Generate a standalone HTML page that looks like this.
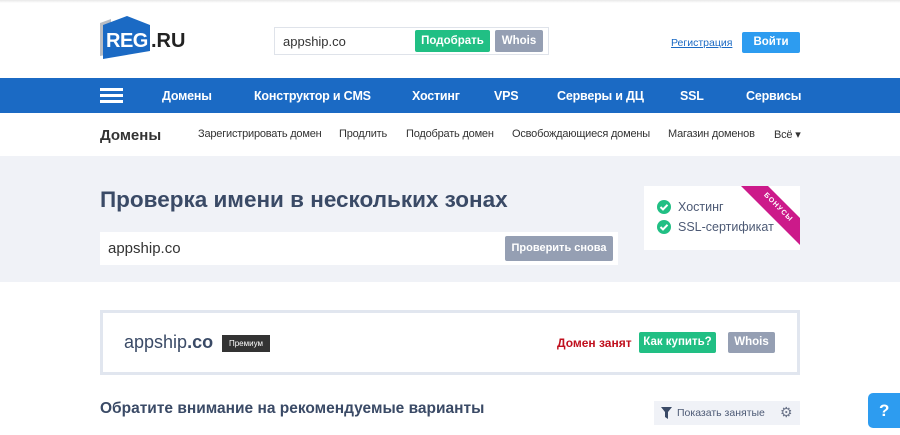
<!DOCTYPE html>
<html><head><meta charset="utf-8"><style>
*{margin:0;padding:0;box-sizing:border-box}
body{width:900px;height:435px;overflow:hidden;background:#fff;font-family:"Liberation Sans",Arial,sans-serif;position:relative;color:#3a4a66}
.a{position:absolute}
.btn{position:absolute;color:#fff;font-weight:bold;font-size:11.5px;text-align:center;border-radius:2px}
</style></head><body>
<div class="a" style="left:0;top:0;width:900px;height:3px;background:linear-gradient(#e8e8e8,#fff)"></div>
<svg class="a" style="left:97px;top:14px" width="56" height="46" viewBox="0 0 56 46"><path d="M3 9 L14 5 L14 40 L3 42Z" fill="#b9bdc4"/><path d="M6 11 L30 2 L53 11 L53 37 L6 45Z" fill="#1b6ac4"/></svg>
<div class="a" style="left:106px;top:30px;font-size:20px;font-weight:bold;color:#fff;letter-spacing:-0.5px">REG</div>
<div class="a" style="left:151px;top:30px;font-size:20px;font-weight:bold;color:#222">.RU</div>
<div class="a" style="left:274px;top:27px;width:275px;height:28px;border:1px solid #dfe3ea"></div>
<div class="a" style="left:283px;top:34px;font-size:13px;color:#333">appship.co</div>
<div class="btn" style="left:415px;top:30px;width:75px;height:22px;line-height:22px;background:#21bf84">Подобрать</div>
<div class="btn" style="left:495px;top:30px;width:48px;height:22px;line-height:22px;background:#959fb3">Whois</div>
<div class="a" style="left:671px;top:37px;font-size:10.5px;color:#1b6ac4;text-decoration:underline">Регистрация</div>
<div class="btn" style="left:742px;top:32px;width:58px;height:21px;line-height:21px;background:#2d9cf0">Войти</div>
<div class="a" style="left:0;top:78px;width:900px;height:35px;background:#1b6ac4"></div>
<div class="a" style="left:100px;top:88px;width:23px;height:3px;background:#fff;box-shadow:0 6px 0 #fff,0 12px 0 #fff"></div>
<div class="a" style="top:89px;left:0;font-size:12.5px;font-weight:bold;color:#fff;white-space:nowrap;letter-spacing:-0.2px">
<span class="a" style="left:162px">Домены</span><span class="a" style="left:254px">Конструктор и CMS</span><span class="a" style="left:412px">Хостинг</span><span class="a" style="left:494px">VPS</span><span class="a" style="left:557px">Серверы и ДЦ</span><span class="a" style="left:680px">SSL</span><span class="a" style="left:746px">Сервисы</span></div>
<div class="a" style="left:100px;top:127px;font-size:15px;font-weight:bold;color:#333">Домены</div>
<div class="a" style="top:128px;left:0;font-size:11px;color:#333;white-space:nowrap;letter-spacing:-0.2px">
<span class="a" style="left:198px">Зарегистрировать домен</span><span class="a" style="left:339px">Продлить</span><span class="a" style="left:406px">Подобрать домен</span><span class="a" style="left:512px">Освобождающиеся домены</span><span class="a" style="left:668px">Магазин доменов</span><span class="a" style="left:774px">Всё ▾</span></div>
<div class="a" style="left:0;top:156px;width:900px;height:126px;background:#f0f2f7"></div>
<div class="a" style="left:100px;top:187px;font-size:22.5px;font-weight:bold;color:#3a4a66">Проверка имени в нескольких зонах</div>
<div class="a" style="left:100px;top:232px;width:518px;height:33px;background:#fff"></div>
<div class="a" style="left:108px;top:240px;font-size:15px;color:#333">appship.co</div>
<div class="btn" style="left:505px;top:236px;width:108px;height:25px;line-height:25px;background:#959fb3;font-size:11px">Проверить снова</div>
<div class="a" style="left:644px;top:186px;width:156px;height:64px;background:#fff;overflow:hidden">
<svg class="a" style="left:0;top:0" width="156" height="64"><polygon points="97,0 124,0 156,32 156,59" fill="#cc1a8a"/></svg>
<div class="a" style="left:104px;top:18px;width:60px;text-align:center;transform:rotate(45deg);color:#fff;font-size:7px;font-weight:bold;letter-spacing:1px">БОНУСЫ</div></div>
<svg class="a" style="left:657px;top:200px" width="14" height="36" viewBox="0 0 14 36"><circle cx="7" cy="7" r="7" fill="#21bf84"/><path d="M3.5 7 L6 9.5 L10.5 4.8" stroke="#fff" stroke-width="2" fill="none"/><circle cx="7" cy="27" r="7" fill="#21bf84"/><path d="M3.5 27 L6 29.5 L10.5 24.8" stroke="#fff" stroke-width="2" fill="none"/></svg>
<div class="a" style="left:678px;top:200px;font-size:12.5px;color:#4d5a75">Хостинг</div>
<div class="a" style="left:678px;top:220px;font-size:12.5px;color:#4d5a75">SSL-сертификат</div>
<div class="a" style="left:100px;top:310px;width:700px;height:65px;border:3px solid #e1e6ef"></div>
<div class="a" style="left:124px;top:332px;font-size:18px;color:#3a4a66">appship<b>.co</b></div>
<div class="a" style="left:222px;top:335px;width:48px;height:17px;background:#333;color:#fff;font-size:8px;text-align:center;line-height:17px">Премиум</div>
<div class="a" style="left:557px;top:336px;font-size:12px;font-weight:bold;color:#c0101e">Домен занят</div>
<div class="btn" style="left:639px;top:332px;width:77px;height:21px;line-height:21px;background:#21bf84">Как купить?</div>
<div class="btn" style="left:728px;top:332px;width:47px;height:21px;line-height:21px;background:#959fb3">Whois</div>
<div class="a" style="left:100px;top:400px;font-size:15.5px;font-weight:bold;color:#3a4a66">Обратите внимание на рекомендуемые варианты</div>
<div class="a" style="left:654px;top:401px;width:146px;height:24px;background:#f0f2f7"></div>
<svg class="a" style="left:661px;top:407px" width="11" height="12" viewBox="0 0 11 12"><path d="M0 0 H11 L7 5 V12 L4 10 V5Z" fill="#3a4a66"/></svg>
<div class="a" style="left:677px;top:407px;font-size:10.5px;color:#4d5a75">Показать занятые</div>
<div class="a" style="left:780px;top:404px;font-size:14px;color:#6a7388">⚙</div>
<div class="a" style="left:868px;top:393px;width:40px;height:35px;background:#2d9cf0;border-radius:5px;color:#fff;font-size:17px;font-weight:bold;line-height:35px;padding-left:11px">?</div>
</body></html>
